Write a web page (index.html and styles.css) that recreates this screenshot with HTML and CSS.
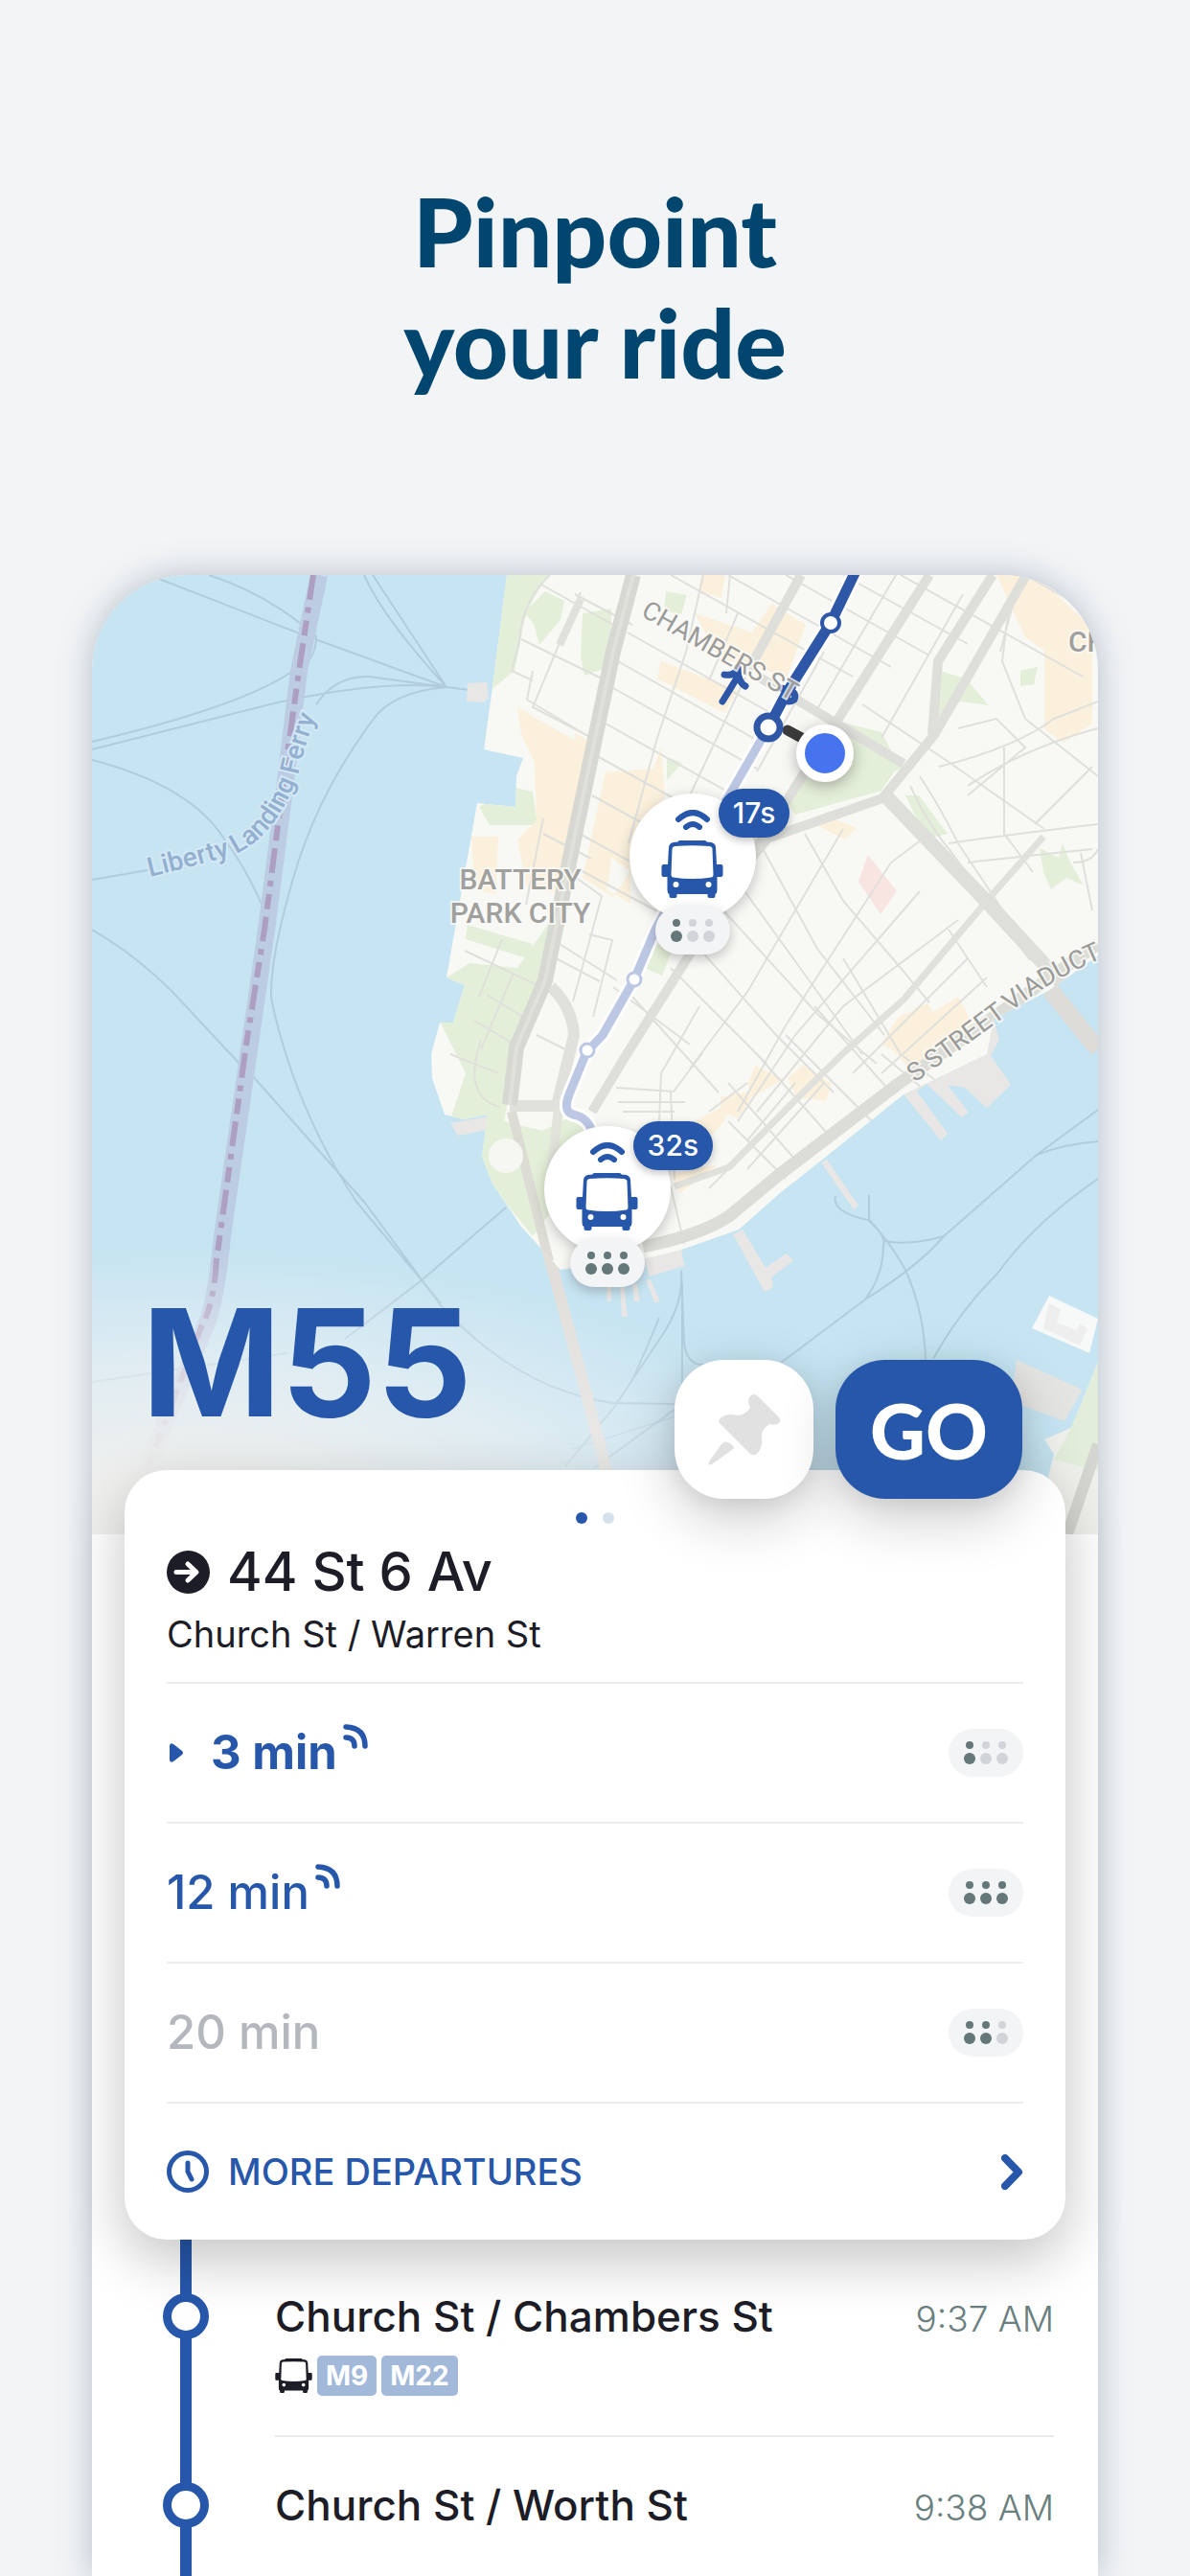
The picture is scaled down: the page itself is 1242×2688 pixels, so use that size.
FILE: index.html
```html
<!DOCTYPE html>
<html lang="en">
<head>
    <meta charset="UTF-8">
    <meta name="viewport" content="width=device-width, initial-scale=1">
    <title>Pinpoint your ride</title>
    <link rel="stylesheet" href="styles.css">
</head>

<body>
    <!-- shared icons -->
    <svg class="sprite" aria-hidden="true">
        <symbol id="bus" viewBox="0 0 64 60">
            <path fill-rule="evenodd" d="M17 1.500q0-1.500 2-1.500h26q2 0 2 1.500l5 .5q4 1 4.500 5l1 18H62q2 0 2 2v9q0 2-2 2h-4v14q0 3-2 4v2q0 2-2 2h-4q-2 0-2-2v-2H16v2q0 2-2 2h-4q-2 0-2-2v-2q-2-1-2-4V38H2q-2 0-2-2v-9q0-2 2-2h4.500l1-18q.5-4 4.500-5zM14 6q-3 .5-3 3l-1 27q0 2 2 2.500 20 3 40 0 2-.5 2-2.500L53 9q0-2.500-3-3-18-1.500-36 0z"/>
            <circle cx="15" cy="46" r="3" fill="#fff"/>
            <circle cx="49" cy="46" r="3" fill="#fff"/>
        </symbol>
        <symbol id="waves" viewBox="0 0 36 21">
            <path d="M3 10q15-14 30 0M11 18q7-6 14 0" fill="none" stroke="currentColor" stroke-width="6" stroke-linecap="round"/>
        </symbol>
        <symbol id="signal" viewBox="0 0 26 26">
            <path d="M3 3q20 1 20 20M3 14q9 0 9 9" fill="none" stroke="currentColor" stroke-width="5.500" stroke-linecap="round"/>
        </symbol>
        <symbol id="person" viewBox="0 0 12 24">
            <circle cx="6" cy="4" r="4"/>
            <circle cx="6" cy="18" r="6"/>
        </symbol>
    </svg>

    <h1 class="headline">Pinpoint<br>your ride</h1>

    <main class="phone">
        <div class="map">
            <svg class="map-art" viewBox="96 600 1050 1001" preserveAspectRatio="xMidYMid slice">
                <defs>
                    <clipPath id="land-clip">
                        <path d="M529 600L523 647 514 717 505 782 546 791 539 810 538 842 498 838 487 900 466 1020 485 1028 473 1067 459 1067 450 1100 451 1125 464 1163 484 1168 509 1163 503 1207 514 1235 544 1280 585 1325 680 1312 711 1304 771 1283 814 1245 857 1211 943 1142 1030 1100 1037 1063 1096 1033 1146 997V600z"/>
                    </clipPath>
                    <path id="ferry-line" d="M156 915Q210 902 244 892Q290 872 312 805Q322 760 344 715"/>
                    <path id="chambers-line" d="M668 642L850 745"/>
                    <path id="viaduct-line" d="M955 1130L1050 1060Q1100 1018 1170 992"/>
                </defs>

                <!-- water -->
                <rect x="96" y="600" width="1050" height="1001" fill="#c6e4f2"/>
                <path d="M470 600h60l-64 420-16 100 10 60 60 80h-50q-60-90-50-150l10-120-15-80z" fill="#c5e3f8" opacity=".4"/>

                <!-- ferry routes -->
                <g fill="none" stroke="#b1cddd" stroke-width="2">
                    <path d="M166 604L310 660 466 717 490 720M218 600Q280 620 330 664 330 690 310 697 260 735 96 774M96 782L290 733Q400 709 466 717M330 735Q350 705 385 706L466 717M380 600Q400 645 466 717M389 600L466 717M466 717Q410 722 390 750 330 830 305 920 282 1000 283 1040 288 1070 305 1120 330 1190 372 1254L460 1360M96 793Q200 820 235 877 260 910 280 960M96 918L154 908M96 970Q140 995 180 1035L250 1110M263 1122L380 1254 460 1362Q540 1450 640 1464L705 1465M528 1260L440 1336 360 1397M96 1442L300 1412M620 1532L712 1465"/>
                    <path d="M711 1326L714 1400Q716 1425 735 1424M711 1326Q714 1360 690 1395L640 1470 590 1530M688 1375Q678 1400 660 1440M712 1340V1470M872 1248Q868 1265 906 1273 925 1290 945 1325 965 1370 966 1420M907 1247V1273Q925 1290 922 1300 922 1330 903 1356M903 1356Q960 1320 985 1290L1082 1205 1146 1158M922 1295Q950 1300 985 1290M1082 1205Q1110 1194 1146 1191M1146 1230Q1080 1275 1040 1330 1000 1370 974 1418M903 1356L815 1422"/>
                    <path d="M598 1512L705 1478" stroke-width="1"/>
                </g>

                <!-- state border -->
                <path d="M333 600L312 700 298 815 278 970 232 1290Q225 1362 214 1385L170 1490 152 1540" fill="none" stroke="#bccce3" stroke-width="18"/>
                <path d="M327 600L312 700 296 815 276 970 257 1090 226 1315Q223 1362 210 1385L170 1490 152 1540" fill="none" stroke="#ad9fc2" stroke-width="6" stroke-dasharray="26 8 6 8 16 8"/>

                <!-- piers -->
                <g fill="#e8e7e5">
                    <path d="M488 713l20-1 2 17-6 4-17-1zM470 1172l40-7v14l-32 6zM765 1288l10-5 24 40 22-15 7 7-23 18 2 10-9 5zM678 1332l36-11-3-18-40 8zM634 1340h4v18h-5zM647 1340h4l4 34h-6zM660 1340h5l3 18h-6zM674 1335h5l10 24h-6zM857 1213l6-3 33 48-5 4z"/>
                    <path d="M943 1142l39 48 7-7-32-44 10-8 37 35 7-5-22-29 18 3 23 21 25-24-21-31 9-16-6-22-94 40z"/>
                </g>
                <path d="M534 1160L573 1310 616 1470 637 1550" fill="none" stroke="#e2dfdb" stroke-width="12"/>

                <!-- islands -->
                <path d="M1095 1352l51 24-9 36-60-26z" fill="#f7f8f8"/>
                <path d="M1095 1360l12 6-4 14 20 8 4-6 8 4-8 18-38-18z" fill="#eeeeee"/>
                <path d="M1061 1419l69 31-19 33-56-21z" fill="#e4e4e2"/>
                <path d="M1146 1421l-28 69-28 12 10 15-6 24 18 60h34z" fill="#f0f1ec"/>
                <path d="M1146 1421l-28 69-18 33 46 12z" fill="#e2eedb"/>
                <path d="M1146 1507l-32 94" stroke="#d5d6d1" stroke-width="12"/>

                <!-- land -->
                <g clip-path="url(#land-clip)">
                    <rect x="440" y="600" width="706" height="740" fill="#f8f9f5"/>
                    <g fill="#e4efd9">
                        <path d="M520 600h54q-25 30-29 60l-8 40-25 20zM608 640l30-5v60l-28 10-4-20zM569 617l20 10-4 20-22 26-6-22-10-12zM500 842l38-20 18 4 5 35-50 0z"/>
                        <path d="M540 1010L575 960l8 20-45 130-12 60 40 10 40-20 10 50-60 80-90-110 20-60-30-60 10-40 24-15zM488 965l68 20-6 15-64-20zM880 830l60-28-20-38-40-10-15 20-30 40zM830 850l90-25 20-30-50-30-40 10-30 60zM980 700l28 8 24 28-30-4-26 30h-8zM1085 885l20 10 4-15 8 20 14 24-18-8-16 12-8-18zM945 830h14l30 40-22 5zM676 980l25 12-10 26-18-8zM695 617l22 4-6 20-18-4zM1065 700l18-4-4 18-14 2zM696 790l16 6-16 18z"/>
                    </g>
                    <g fill="#fbf0dc">
                        <path d="M540 738l80 46-30 150-40-8-10-50 20-20-2-60 -14-30zM492 873l28 0-2 60-22-4zM600 765l18 10-10 80-14 20zM732 600h25l-4 24-24-8zM725 640l60 20 20-30 36 22-20 56-30-12-40-8zM690 690l80 30-14 24-70-36zM690 780l-8 22-50 4-24 110 32 20 30-46 24-60zM638 895l20 14v34l-24-14zM1040 600h40l60 55v100l-30 20-20-14v-82l-20-14zM850 860l20-6 24 10-12 12zM920 1090l80-50 22 40-60 30zM922 1085l16-24 30-14 26 44-40 30z"/>
                        <path d="M788 1112l30 14-32 18-6-12zM752 1145l38-8-20 30-18-8zM822 1125l16-14 30 20-6 18-30-4zM725 1170l38-20-8 22-50 50-4-18zM700 1225l50-10-40 30z"/>
                    </g>
                    <path d="M896 920l10-28 30 38-17 24z" fill="#f8e4e1"/>
                    <g fill="none" stroke="#dfe0db" stroke-width="2">
                        <!-- battery park city -->
                        <path d="M574 600q-30 28-32 70l-8 30 22 10M565 610l75 42M606 618l-50 120 58 30M544 667l90 44M556 700l-6 30 60 36M567 854l-18 90M567 870l50 26M485 992l80 38M524 980l-24 60M536 1015l-34 80M508 1038l40 24M495 1065l44 26M600 915l28 20-30 110M584 985l60 38M580 1000l46 24M615 975l24 6-20 80M502 1085q-20 60 20 70M470 1100l50 20M560 1080l40 20"/>
                        <!-- tribeca -->
                        <path d="M700 600l190 106M760 600l170 96M820 600l150 84M880 600l130 72M655 660l160 90M645 690l155 88M640 718l150 84M632 755l140 78M625 790l120 66M618 830l80 44M605 870l80 44M600 905l90 48M734 600l-18 80-30 90-30 110M762 600l-4 40M800 660l-80 170M770 640l-30 70M860 680l-70 125M935 600l-85 145M1005 620l-85 150M1070 600l70 40M600 620l60 32M900 735l90 60 100 70M940 600l190 106"/>
                        <!-- civic center and bridge ramps -->
                        <path d="M980 800q80-20 120-50l46-18M1010 820q60-40 136-60M1052 640l-6 50 24 60 76 60M1060 620l-16 60M990 880q70-10 156-20M1048 780v90l30 40M960 810q20 30 40 70l80 120M950 820q18 40 45 72l80 110M930 900l40-30M1120 900q20 0 26-14M1128 890l12 60M1000 760l40-10 30 30-60 50M1010 900l130-14M1140 800l-60 60"/>
                        <!-- financial district -->
                        <path d="M793 880l60 110 70 90M770 920l130 180M755 950l100 110 60 50M730 990l80 90 60 60M700 1010l100 100M660 1040l90 100M640 1030l80 60M840 870l40 70 60 70 30 36M880 865l-100 170-60 80M930 900l-110 170-50 90M960 930l-130 150-60 90M1000 960l-120 90-90 110M880 1000l60 100 40 30M850 1050l80 90M820 1080l90 90M790 1100l80 90M760 1130l70 80M990 970l40 60M1010 1000l-120 120M1030 1020l-110 100M920 1100l60 50M730 1050l-40 70-4 100M643 1135l60 4 30-40M645 1150h70M650 1160h54M700 1140l4 90M740 1160l40-30M760 1170l60 60M780 1190l50-60M700 1238l14 60M830 1150l-90 90M860 1130l-80 90"/>
                    </g>
                    <g fill="none" stroke="#e0e1dc" stroke-width="10">
                        <path d="M836 600l-54 98M970 600l-95 150-82 130-139 220-36 60M1071 600l-96 167-54 66-120 42-20 25M1036 600l-57 90-6 76M793 707l150 90" stroke="#dedfda"/>
                        <path d="M1089 873l-53 60-93 110-64 57-50 49-68 69-57 20" stroke-width="7"/>
                        <path d="M575 1030q22 20 24 50l-18 74M532 1154h52" stroke-width="12"/>
                        <path d="M606 625l-22 48" stroke-width="8"/>
                    </g>
                    <g fill="none" stroke="#d7d8d1">
                        <path d="M661 600l-21 80-46 220-25 123-30 70-7 60" stroke-width="16"/>
                        <path d="M661 600l-21 80-46 220-25 123-30 70-7 60" stroke="#e0e1da" stroke-width="4"/>
                        <path d="M921 827l108 113 117 127" stroke-width="15" stroke="#dedfd9"/>
                        <path d="M1146 985L936 1132l-122 93-53 44q-30 20-90 32" stroke-width="13" stroke="#dcddd7"/>
                    </g>
                    <path d="M534 1160L573 1316" fill="none" stroke="#dcdcd4" stroke-width="10"/>
                    <path d="M583 1156l-10 90" fill="none" stroke="#e2e3da" stroke-width="10"/>
                    <circle cx="528" cy="1206" r="18" fill="#f6f6f3"/>
                </g>
                <path d="M1096 1033l50 62" stroke="#dddcd8" stroke-width="18"/>

                <!-- route -->
                <g fill="none" stroke-linecap="round" stroke-linejoin="round">
                    <path d="M802 759l-52 90-66 121-22 52-33 58-17 18-18 44q-8 20 8 22 14 4 18 24" stroke="#fff" stroke-width="15"/>
                    <path d="M802 759l-52 90-66 121-22 52-33 58-17 18-18 44q-8 20 8 22 14 4 18 24" stroke="#bcc7e4" stroke-width="9"/>
                    <path d="M893 596l-26 54-46 73-19 36" stroke="#fff" stroke-width="17"/>
                    <path d="M893 596l-26 54-46 73-19 36" stroke="#2e57a8" stroke-width="11"/>
                    <path d="M754 732l16-26M756 704q12 2 14-8 0 16 8 20M815 718q18 2 14 12-6 4-12 0" stroke="#2e57a8" stroke-width="7"/>
                    <path d="M822 762l22 12" stroke="#3b3b3b" stroke-width="11"/>
                </g>
                <g fill="#fff">
                    <circle cx="867" cy="650" r="9" stroke="#2e57a8" stroke-width="4"/>
                    <circle cx="802" cy="759" r="12" stroke="#2e57a8" stroke-width="7"/>
                    <circle cx="662" cy="1022" r="7" stroke="#bcc7e4" stroke-width="3"/>
                    <circle cx="613" cy="1096" r="7" stroke="#bcc7e4" stroke-width="3"/>
                </g>

                <!-- labels -->
                <g class="map-label">
                    <text class="ferry"><textPath href="#ferry-line">Liberty Landing Ferry</textPath></text>
                    <text class="street"><textPath href="#chambers-line">CHAMBERS ST</textPath></text>
                    <text class="street"><textPath href="#viaduct-line">S STREET VIADUCT</textPath></text>
                    <text class="district" x="543" y="928" text-anchor="middle">BATTERY</text>
                    <text class="district" x="543" y="963" text-anchor="middle">PARK CITY</text>
                    <text class="district" x="1115" y="680">CH</text>
                </g>
            </svg>

            <span class="me"></span>

            <div class="pin pin-first">
                <div class="pin-disc">
                    <svg class="pin-waves"><use href="#waves"/></svg>
                    <svg class="pin-bus"><use href="#bus"/></svg>
                </div>
                <span class="pin-time">17s</span>
                <span class="crowd pin-crowd">
                    <svg class="on"><use href="#person"/></svg>
                    <svg><use href="#person"/></svg>
                    <svg><use href="#person"/></svg>
                </span>
            </div>

            <div class="pin pin-second">
                <div class="pin-disc">
                    <svg class="pin-waves"><use href="#waves"/></svg>
                    <svg class="pin-bus"><use href="#bus"/></svg>
                </div>
                <span class="pin-time">32s</span>
                <span class="crowd pin-crowd">
                    <svg class="on"><use href="#person"/></svg>
                    <svg class="on"><use href="#person"/></svg>
                    <svg class="on"><use href="#person"/></svg>
                </span>
            </div>
        </div>

        <div class="route-head">
            <h2 class="route-name">M55</h2>
            <button class="btn btn-pin" type="button" aria-label="Pin this line">
                <svg viewBox="0 0 76 74" width="76" height="74">
                    <path d="M44 2q4-4 8 0l22 22q3 4 0 6-4 3-10 1-9 6-8 14 1 10-4 16-4 4-8 1L12 30q-2-3 2-6 6-5 16-2 8 0 14-8-4-8 0-12zM14 52q6-6 13 3 0 2-2 3L4 73q-5 2-3-3z" fill="#e1e1e1"/>
                </svg>
            </button>
            <button class="btn btn-go" type="button">GO</button>
        </div>

        <section class="card">
            <div class="pager"><i class="current"></i><i></i></div>
            <h3 class="direction">
                <svg viewBox="0 0 45 45" width="45" height="45">
                    <circle cx="22.500" cy="22.500" r="22.500" fill="#1d1d27"/>
                    <path d="M10 22.500h20M22 14l9 8.500-9 8.500" fill="none" stroke="#fff" stroke-width="5" stroke-linecap="round" stroke-linejoin="round"/>
                </svg>
                44 St 6 Av
            </h3>
            <p class="stop-here">Church St / Warren St</p>

            <ul class="departures">
                <li class="next">
                    <svg class="caret" viewBox="0 0 14 20"><path d="M0 3q0-4 4-2l9 7q2 2 0 4l-9 7q-4 2-4-2z"/></svg>
                    <span class="eta">3 min <svg><use href="#signal"/></svg></span>
                    <span class="crowd">
                        <svg class="on"><use href="#person"/></svg>
                        <svg><use href="#person"/></svg>
                        <svg><use href="#person"/></svg>
                    </span>
                </li>
                <li>
                    <span class="eta">12 min <svg><use href="#signal"/></svg></span>
                    <span class="crowd">
                        <svg class="on"><use href="#person"/></svg>
                        <svg class="on"><use href="#person"/></svg>
                        <svg class="on"><use href="#person"/></svg>
                    </span>
                </li>
                <li class="scheduled">
                    <span class="eta">20 min</span>
                    <span class="crowd">
                        <svg class="on"><use href="#person"/></svg>
                        <svg class="on"><use href="#person"/></svg>
                        <svg><use href="#person"/></svg>
                    </span>
                </li>
            </ul>

            <a class="more" href="#">
                <svg viewBox="0 0 44 44" width="44" height="44">
                    <circle cx="22" cy="22" r="19.500"/>
                    <path d="M22 13v9l4 8"/>
                </svg>
                MORE DEPARTURES
                <svg class="chevron" viewBox="0 0 23 37" width="23" height="37"><path d="M4 4l14 14.500L4 33"/></svg>
            </a>
        </section>

        <ol class="stops">
            <li>
                <div class="stop">
                    <div class="stop-top"><span class="stop-name">Church St / Chambers St</span><time>9:37 AM</time></div>
                    <div class="transfers">
                        <svg><use href="#bus"/></svg>
                        <span>M9</span>
                        <span>M22</span>
                    </div>
                </div>
            </li>
            <li>
                <div class="stop">
                    <div class="stop-top"><span class="stop-name">Church St / Worth St</span><time>9:38 AM</time></div>
                </div>
            </li>
        </ol>
    </main>
</body>

</html>
```
FILE: styles.css
```css
*,
*::before,
*::after {
    box-sizing: border-box;
}

body {
    margin: 0;
    min-height: 100vh;
    display: flex;
    flex-direction: column;
    background: #f2f4f6;
    color: #1d1d27;
    font-family: Inter, "Open Sans", sans-serif;
}

h1, h2, h3, p, ul, ol {
    margin: 0;
    padding: 0;
    font-weight: normal;
}

ul, ol {
    list-style: none;
}

.sprite {
    position: absolute;
    width: 0;
    height: 0;
}

.headline {
    padding: 182px 0 186px;
    text-align: center;
    font: 900 100px/116px Lato, sans-serif;
    color: #01466f;
}

.phone {
    flex: 1;
    display: flex;
    flex-direction: column;
    margin: 0 96px;
    background: #fff;
    border-radius: 100px 100px 0 0;
    box-shadow: 0 0 32px rgba(120, 140, 155, 0.5);
}

/* map */
.map {
    position: relative;
    aspect-ratio: 1050 / 1001;
    border-radius: 100px 100px 0 0;
    overflow: hidden;
}

.map::after {
    content: "";
    position: absolute;
    inset: 60% 0 0;
    background: radial-gradient(ellipse 70% 75% at 8% 100%, #f0f0ee 20%, rgba(240, 242, 243, 0.6) 60%, rgba(240, 242, 243, 0));
}

.map-art {
    display: block;
    width: 100%;
    height: 100%;
}

.map-label text {
    font-family: Roboto, sans-serif;
    paint-order: stroke;
    stroke: rgba(250, 250, 248, 0.8);
    stroke-width: 4px;
}

.map-label .ferry {
    font-size: 28px;
    font-weight: 500;
    fill: #93b0d0;
    stroke: #d3e8f5;
}

.map-label .street {
    font-size: 27px;
    fill: #9b9b98;
}

.map-label .district {
    font-size: 30px;
    font-weight: 500;
    fill: #a0a09d;
}

.me {
    position: absolute;
    left: 72.9%;
    top: 18.6%;
    width: 60px;
    height: 60px;
    margin: -30px;
    border: 9px solid #fff;
    border-radius: 50%;
    background: #4674ee;
    box-shadow: 0 4px 16px rgba(0, 0, 0, 0.3);
}

.pin {
    position: absolute;
    width: 132px;
    height: 132px;
    margin: -66px;
    color: #2657aa;
}

.pin-first {
    left: 59.7%;
    top: 29.4%;
}

.pin-second {
    left: 51.2%;
    top: 64%;
}

.pin-disc {
    height: 132px;
    padding-top: 17px;
    display: flex;
    flex-direction: column;
    align-items: center;
    gap: 11px;
    background: #fff;
    border-radius: 50%;
    box-shadow: 0 4px 14px rgba(60, 60, 60, 0.3);
}

.pin-waves {
    width: 36px;
    height: 21px;
}

.pin-bus {
    width: 65px;
    height: 60px;
    fill: currentColor;
}

.pin-time {
    position: absolute;
    left: 93px;
    top: -5px;
    height: 51px;
    padding: 0 15px;
    border-radius: 26px;
    background: #2657aa;
    color: #fff;
    font-size: 30px;
    font-weight: 500;
    line-height: 51px;
    box-shadow: 0 3px 8px rgba(0, 0, 0, 0.25);
}

.crowd {
    display: flex;
    align-items: center;
    justify-content: center;
    gap: 5px;
    width: 78px;
    height: 50px;
    border-radius: 25px;
    background: #f2f4f5;
}

.crowd svg {
    width: 12px;
    height: 24px;
    fill: #d1d4d8;
}

.crowd .on {
    fill: #647779;
}

.pin-crowd {
    position: absolute;
    left: 27px;
    top: 118px;
    box-shadow: 0 4px 12px rgba(60, 60, 60, 0.3);
}

/* line name and buttons, lying over the foot of the map */
.route-head {
    position: relative;
    z-index: 2;
    display: flex;
    align-items: flex-end;
    gap: 23px;
    height: 200px;
    margin-top: -237px;
    padding: 0 79px 0 52px;
}

.route-name {
    flex: 1;
    align-self: flex-start;
    font: 700 156px/116px Inter, sans-serif;
    color: #2657aa;
}

.btn {
    display: flex;
    align-items: center;
    justify-content: center;
    height: 145px;
    padding: 0;
    border: 0;
    border-radius: 52px;
    box-shadow: 0 20px 60px rgba(0, 0, 0, 0.2), 0 4px 24px rgba(0, 0, 0, 0.08);
}

.btn-pin {
    width: 145px;
    background: #fff;
}

.btn-go {
    width: 195px;
    background: #2657aa;
    color: #fff;
    font: 900 80px/80px Lato, sans-serif;
}

/* departures card */
.card {
    position: relative;
    z-index: 1;
    margin: -30px 34px 0;
    padding: 44px 44px 0;
    background: #fff;
    border-radius: 44px;
    box-shadow: 0 20px 60px rgba(0, 0, 0, 0.24);
}

.pager {
    display: flex;
    justify-content: center;
    gap: 16px;
}

.pager i {
    width: 12px;
    height: 12px;
    border-radius: 50%;
    background: #d5e1eb;
}

.pager .current {
    background: #2657aa;
}

.direction {
    display: flex;
    align-items: center;
    gap: 18px;
    margin-top: 20px;
    font-size: 56px;
    font-weight: 500;
    line-height: 60px;
}

.stop-here {
    padding: 12px 0 27px;
    font-size: 38px;
    line-height: 46px;
}

.departures li {
    display: flex;
    align-items: center;
    height: 146px;
    border-top: 2px solid #ededed;
    color: #2657aa;
}

.caret {
    width: 14px;
    height: 20px;
    margin: 0 29px 0 3px;
    fill: currentColor;
}

.eta {
    flex: 1;
    display: flex;
    gap: 6px;
    font-size: 49px;
    line-height: 60px;
    font-weight: 500;
}

.next .eta {
    font-weight: 700;
}

.eta svg {
    width: 26px;
    height: 26px;
}

.departures .scheduled {
    color: #b4b7bd;
}

.more {
    display: flex;
    align-items: center;
    gap: 20px;
    height: 144px;
    border-top: 2px solid #ededed;
    color: #2657aa;
    font-size: 38px;
    font-weight: 500;
    text-decoration: none;
}

.more svg {
    fill: none;
    stroke: currentColor;
    stroke-width: 5px;
    stroke-linecap: round;
    stroke-linejoin: round;
}

.more .chevron {
    margin-left: auto;
    stroke-width: 8px;
}

/* stop list */
.stops {
    flex: 1;
    display: flex;
    flex-direction: column;
    padding-left: 92px;
    overflow: hidden;
}

.stops li {
    position: relative;
    display: flex;
    border-left: 12px solid #2657aa;
}

.stops li:last-child {
    flex: 1;
}

/* stop ring sits on the line */
.stops li::before {
    content: "";
    position: absolute;
    left: -30px;
    top: 56px;
    width: 48px;
    height: 48px;
    border: 9px solid #2657aa;
    border-radius: 50%;
    background: #fff;
}

.stop {
    flex: 1;
    height: 206px;
    margin: 0 46px 0 87px;
    padding-top: 56px;
    border-bottom: 2px solid #ebebeb;
}

.stops li:last-child::before {
    top: 47px;
}

.stops li:last-child .stop {
    height: auto;
    padding-top: 47px;
    border-bottom: 0;
}

.stop-top {
    display: flex;
    justify-content: space-between;
    align-items: baseline;
    line-height: 48px;
}

.stop-name {
    font-size: 44px;
    font-weight: 500;
}

.stops time {
    font-size: 37px;
    font-weight: 300;
    color: #6b7f80;
}

.transfers {
    display: flex;
    align-items: center;
    gap: 5px;
    margin-top: 14px;
}

.transfers svg {
    width: 39px;
    height: 36px;
    fill: #1d1d27;
}

.transfers span {
    padding: 0 9px;
    border-radius: 5px;
    background: #a2b9da;
    color: #fff;
    font-size: 28px;
    font-weight: 700;
    line-height: 42px;
}
```
